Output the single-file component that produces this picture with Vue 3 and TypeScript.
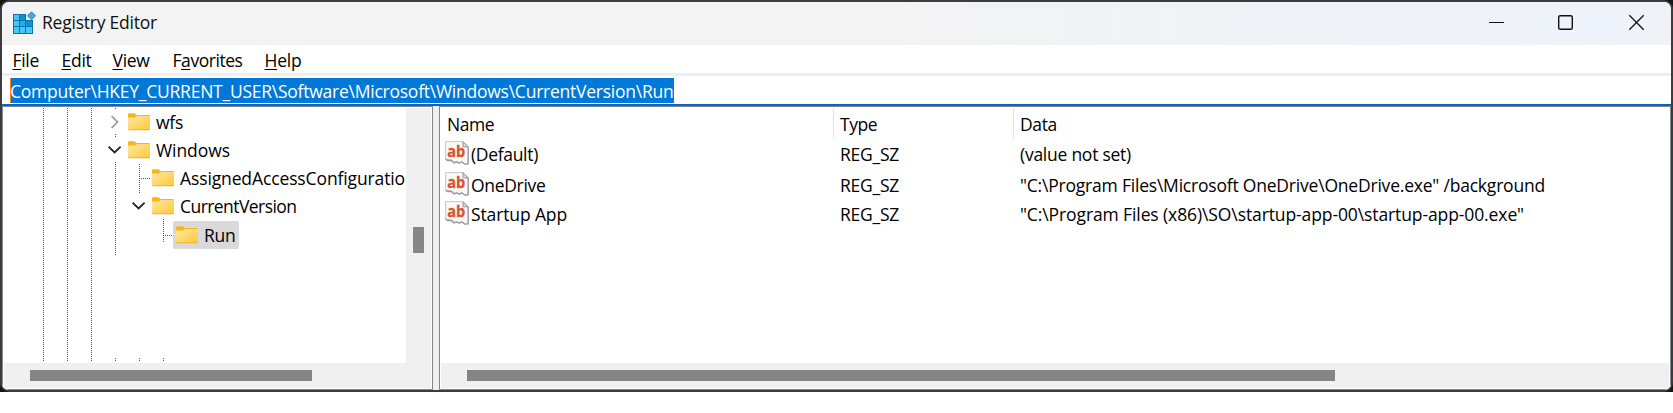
<script setup lang="ts">
interface TextFit { text: string; width: number }
interface TreeNode extends TextFit { cls: string; chevron?: 'right' | 'down'; selected?: boolean }
interface ValueRow { cls: string; name: TextFit; data: TextFit }

const menus = [
  { cls: 'm-file', pre: '', key: 'F', post: 'ile', width: 26.5 },
  { cls: 'm-edit', pre: '', key: 'E', post: 'dit', width: 30 },
  { cls: 'm-view', pre: '', key: 'V', post: 'iew', width: 37 },
  { cls: 'm-fav', pre: 'F', key: 'a', post: 'vorites', width: 70 },
  { cls: 'm-help', pre: '', key: 'H', post: 'elp', width: 37 },
]

const nodes: TreeNode[] = [
  { cls: 'd1', text: 'wfs', width: 27, chevron: 'right' },
  { cls: 'd1', text: 'Windows', width: 74, chevron: 'down' },
  { cls: 'd2', text: 'AssignedAccessConfiguratio', width: 225 },
  { cls: 'd2', text: 'CurrentVersion', width: 116.5, chevron: 'down' },
  { cls: 'd3', text: 'Run', width: 31.5, selected: true },
]

const rows: ValueRow[] = [
  { cls: 'r1', name: { text: '(Default)', width: 67 }, data: { text: '(value not set)', width: 111 } },
  { cls: 'r2', name: { text: 'OneDrive', width: 74.5 }, data: { text: '"C:\\Program Files\\Microsoft OneDrive\\OneDrive.exe" /background', width: 525 } },
  { cls: 'r3', name: { text: 'Startup App', width: 96 }, data: { text: '"C:\\Program Files (x86)\\SO\\startup-app-00\\startup-app-00.exe"', width: 504 } },
]

const path = 'Computer\\HKEY_CURRENT_USER\\Software\\Microsoft\\Windows\\CurrentVersion\\Run'

const vFit = {
  mounted(el: HTMLElement, binding: { value: number }) {
    const count = (el.textContent ?? '').length
    const natural = el.getBoundingClientRect().width
    el.style.letterSpacing = `${(binding.value - natural) / count}px`
  },
}
</script>

<template>
  <div class="desktop">
    <div class="window">
      <header class="titlebar">
        <svg class="app-icon" width="24" height="24" viewBox="0 0 24 24">
          <path d="M1 2h13v6h7v14H1z" fill="#0873b4" />
          <g fill="#46c8f5">
            <path d="M2 3h5v5H2z" /><path d="M2 9h5v5H2z" /><path d="M8 9h5v5H8z" fill="#22aee6" />
            <path d="M2 15h5v6H2z" /><path d="M8 15h5v6H8z" /><path d="M14 15h6v6h-6z" />
          </g>
          <path d="M8 3h5v5H8z" fill="#0f94d2" /><path d="M14 9h6v5h-6z" fill="#0f94d2" />
          <path d="M19.5 -.2l4 4-4 4-4-4z" fill="#49a9d4" stroke="#2b86b4" stroke-width="1" />
        </svg>
        <span v-fit="115" class="title">Registry Editor</span>
        <svg class="controls" width="160" height="20" viewBox="0 0 160 20" fill="none" stroke="#111">
          <path d="M4 9.5h15" stroke-width="1.2" />
          <rect x="73.7" y="2.7" width="13.6" height="13.6" rx="1.6" stroke-width="1.4" />
          <path d="M144.3 2.3l14.4 14.4M158.7 2.3l-14.4 14.4" stroke-width="1.3" />
        </svg>
      </header>
      <nav class="menubar">
        <span v-for="m in menus" :key="m.key" v-fit="m.width" :class="m.cls">{{ m.pre }}<u>{{ m.key }}</u>{{ m.post }}</span>
      </nav>
      <div class="address"><div class="selection"><span v-fit="663.5">{{ path }}</span></div></div>
      <main class="panes">
        <section class="pane tree-pane">
          <div class="tree">
            <svg class="guides" width="402" height="255" viewBox="0 0 402 255" fill="none" stroke="#555" stroke-dasharray="1 1" shape-rendering="crispEdges">
              <path d="M39.5 0v253M63.5 0v253M87.5 0v253M111.5 0v1M111.5 26v3M111.5 54v94M111.5 250v3M135.5 56v30M135.5 250v3M159.5 111v24M159.5 250v3M137 70.5h10M161 127.5h9" />
            </svg>
            <div v-for="n in nodes" :key="n.text" class="node" :class="n.cls">
              <span class="toggle">
                <svg v-if="n.chevron" width="14" height="14" viewBox="0 0 14 14" fill="none" stroke-width="1.6">
                  <path v-if="n.chevron === 'right'" d="M3.6 1l6 6-6 6" stroke="#929292" />
                  <path v-else d="M.6 3.6l6 5.8 6-5.8" stroke="#222" stroke-width="1.8" />
                </svg>
              </span>
              <span class="item" :class="{ selected: n.selected }">
                <svg width="22" height="18" viewBox="0 0 22 18">
                  <defs><linearGradient id="folder" x2="1" y2="1"><stop stop-color="#ffe8a3" /><stop offset="1" stop-color="#ffc937" /></linearGradient></defs>
                  <path d="M0 1.5Q0 .3 1 .3h5.5L8.5 2H21q1 0 1 1v4H0z" fill="#f8b51b" />
                  <path d="M0 4.6h7L8.8 3H22v13.2q0 .9-.9.9H.9q-.9 0-.9-.9z" fill="url(#folder)" />
                  <path d="M.3 16.8h21.4" stroke="#e5a91f" stroke-width=".8" />
                </svg>
                <span v-fit="n.width" class="label">{{ n.text }}</span>
              </span>
            </div>
          </div>
          <div class="vscroll"><i></i></div>
          <div class="hscroll"><i class="tree-thumb"></i></div>
        </section>
        <section class="pane list-pane">
          <div class="list">
            <div class="row head">
              <div class="name"><span v-fit="47">Name</span></div>
              <div class="type"><span v-fit="37">Type</span></div>
              <div class="data"><span v-fit="37">Data</span></div>
            </div>
            <div v-for="r in rows" :key="r.name.text" class="row" :class="r.cls">
              <div class="name">
                <svg width="24" height="24" viewBox="0 0 24 24">
                  <path d="M.6.6H18l5.2 5v17l-3.7.3-2.6-2.3-3 1.2-2-1.3-3.2.5-2.5-2.6H2.4L.6 17.5z" fill="#f8f8f8" stroke="#c8c8c8" />
                  <path d="M.5 18l2 1.5h3.7L9 22l3-1 2 1.2 3-1.2 2.7 2.2 3.5-.2V6" fill="none" stroke="#999" stroke-width="1.3" />
                  <path d="M18 .8v5h5z" fill="#e1e1e1" stroke="#929292" />
                  <text x="11.3" y="15.7" text-anchor="middle" textLength="18" lengthAdjust="spacingAndGlyphs">ab</text>
                </svg>
                <span v-fit="r.name.width">{{ r.name.text }}</span>
              </div>
              <div class="type"><span v-fit="59">REG_SZ</span></div>
              <div class="data"><span v-fit="r.data.width">{{ r.data.text }}</span></div>
            </div>
          </div>
          <div class="hscroll"><i class="list-thumb"></i></div>
        </section>
      </main>
    </div>
  </div>
</template>

<style>
html, body { margin: 0; background: #fff; overflow: hidden; }
</style>

<style scoped>
* { box-sizing: border-box; }
.desktop { width: 1673px; height: 392px; background: #141414; font: 17.5px/28px "Open Sans", "Noto Sans", sans-serif; color: #000; white-space: pre; }
svg { display: block; flex: none; overflow: visible; }
.window { width: 1673px; height: 392px; border: 2px solid #3c3b3d; border-radius: 9px; overflow: hidden; background: #fff; display: flex; flex-direction: column; }
.titlebar { height: 43px; flex: none; display: flex; background: linear-gradient(90deg, #f3f3f3 0 50%, #f0f2f8 80%, #eef2fa 96%, #f1f2f7); }
.app-icon { margin: 10px 0 0 10px; }
.title { margin: 6px 0 0 6px; color: #111; height: 28px; }
.controls { margin: 11px 26px 0 auto; }
.menubar { height: 28px; flex: none; display: grid; grid-template-columns: 49px 51px 60px 92px 60px; padding-left: 10.5px; align-items: start; justify-items: start; }
.menubar span { margin-top: 1px; height: 27px; }
.menubar u { text-decoration-thickness: 1px; text-underline-offset: 2px; text-decoration-skip-ink: none; }
.address { height: 33px; flex: none; border-top: 3px solid #eee; border-bottom: 2px solid #0067c0; padding: 2px 0 0 8px; }
.selection { width: 664px; height: 25px; background: #0078d7; color: #fff; line-height: 27px; border-left: 1px solid #f08018; }
.selection span { margin-left: -1px; }
.panes { flex: 1; display: flex; gap: 6px; background: #f0f0f0; min-height: 0; }
.pane { background: #fff; border: 1px solid #828790; padding: 1px; }
.tree-pane { width: 431px; display: grid; grid-template-columns: 402px 25px; grid-template-rows: 255px 25px; }
.tree { position: relative; padding-top: 1px; overflow: hidden; }
.guides { position: absolute; left: 0; top: 0; }
.node { position: relative; height: 28px; display: flex; }
.d1 { padding-left: 104px; }
.d2 { padding-left: 128px; }
.d3 { padding-left: 152px; }
.toggle { width: 17px; flex: none; padding-top: 6px; }
.item { display: flex; flex: none; height: 28px; padding: 4px 3px 0; }
.item.selected { background: #d9d9d9; border-radius: 2px; padding-top: 5px; width: 66px; }
.label { margin: -5px 0 0 6px; height: 28px; flex: none; }
.selected .label { margin-top: -6px; line-height: 30px; }
.vscroll { background: #f0f0f0; padding: 119px 0 0 7px; }
.vscroll i { display: block; width: 11px; height: 26px; background: #868686; }
.hscroll { grid-column: 1 / -1; height: 25px; background: #f0f0f0; padding-top: 7px; }
.hscroll i { display: block; height: 11px; background: #858585; margin-left: 26px; }
.tree-thumb { width: 282px; }
.list-thumb { width: 868px; }
.list-pane { flex: 1; }
.list { height: 255px; }
.row { display: grid; grid-template-columns: 393px 180px 1fr; }
.row > div { display: flex; }
.row span { flex: none; height: 28px; margin-top: 1px; }
.head { height: 31px; line-height: 30px; }
.head .name { padding-left: 6px; border-right: 1px solid #e5e5e5; }
.head .type { border-right: 1px solid #e5e5e5; }
.row .type, .row .data { padding-left: 6px; }
.row .name svg { margin: 2px 2px 0 4px; }
.r1 { height: 31px; }
.r2 { height: 29px; }
.r3 { height: 29px; }
.row text { font: bold 15.5px "Open Sans", sans-serif; fill: #da5330; stroke: #da5330; stroke-width: .3px; }
</style>
